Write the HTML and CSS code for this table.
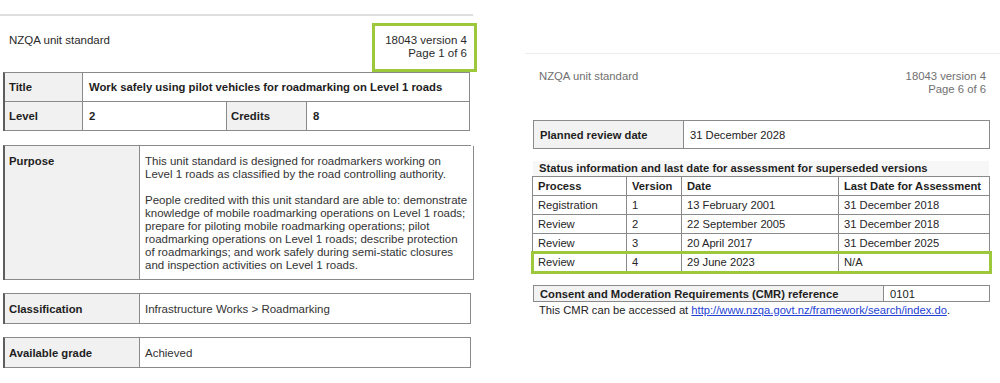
FILE: index.html
```html
<!DOCTYPE html>
<html lang="en">
<head>
<meta charset="utf-8">
<title>NZQA unit standard 18043</title>
<link rel="stylesheet" href="styles.css">
</head>
<body>
<div class="screen">
  <section class="page page-left">
    <div class="rule rule-left"></div>
    <header class="doc-head">
      <div class="doc-name">NZQA unit standard</div>
      <div class="doc-ref highlight">18043 version 4<br>Page 1 of 6</div>
    </header>

    <div class="tbl tbl-title">
      <div class="cell label">Title</div>
      <div class="cell value bold span3">Work safely using pilot vehicles for roadmarking on Level 1 roads</div>
      <div class="cell label">Level</div>
      <div class="cell value bold">2</div>
      <div class="cell label">Credits</div>
      <div class="cell value bold">8</div>
    </div>

    <div class="tbl tbl-purpose">
      <div class="cell label">Purpose</div>
      <div class="cell value text">
        <p>This unit standard is designed for roadmarkers working on<br>Level 1 roads as classified by the road controlling authority.</p>
        <p>People credited with this unit standard are able to: demonstrate<br>knowledge of mobile roadmarking operations on Level 1 roads;<br>prepare for piloting mobile roadmarking operations; pilot<br>roadmarking operations on Level 1 roads; describe protection<br>of roadmarkings; and work safely during semi-static closures<br>and inspection activities on Level 1 roads.</p>
      </div>
    </div>

    <div class="tbl tbl-pair">
      <div class="cell label">Classification</div>
      <div class="cell value text">Infrastructure Works &gt; Roadmarking</div>
    </div>

    <div class="tbl tbl-pair">
      <div class="cell label">Available grade</div>
      <div class="cell value text">Achieved</div>
    </div>
  </section>

  <section class="page page-right">
    <div class="rule rule-right"></div>
    <header class="doc-head-r">
      <div class="doc-name-r">NZQA unit standard</div>
      <div class="doc-ref-r">18043 version 4<br>Page 6 of 6</div>
    </header>

    <div class="rtbl rtbl-review">
      <div class="rcell rlabel">Planned review date</div>
      <div class="rcell">31 December 2028</div>
    </div>

    <div class="caption">Status information and last date for assessment for superseded versions</div>
    <div class="status">
      <div class="srow shead">
        <div class="scell">Process</div>
        <div class="scell">Version</div>
        <div class="scell">Date</div>
        <div class="scell">Last Date for Assessment</div>
      </div>
      <div class="srow">
        <div class="scell">Registration</div>
        <div class="scell">1</div>
        <div class="scell">13 February 2001</div>
        <div class="scell">31 December 2018</div>
      </div>
      <div class="srow">
        <div class="scell">Review</div>
        <div class="scell">2</div>
        <div class="scell">22 September 2005</div>
        <div class="scell">31 December 2018</div>
      </div>
      <div class="srow">
        <div class="scell">Review</div>
        <div class="scell">3</div>
        <div class="scell">20 April 2017</div>
        <div class="scell">31 December 2025</div>
      </div>
      <div class="srow srow-hl">
        <div class="scell">Review</div>
        <div class="scell">4</div>
        <div class="scell">29 June 2023</div>
        <div class="scell">N/A</div>
      </div>
    </div>

    <div class="rtbl rtbl-cmr">
      <div class="rcell rlabel">Consent and Moderation Requirements (CMR) reference</div>
      <div class="rcell">0101</div>
    </div>
    <p class="cmr-note">This CMR can be accessed at <a href="#">http://www.nzqa.govt.nz/framework/search/index.do</a>.</p>
  </section>
</div>
</body>
</html>
```

FILE: styles.css
```css
* { box-sizing: border-box; }

html, body {
  margin: 0;
  padding: 0;
  background: #ffffff;
}

body {
  font-family: "Liberation Sans", Arial, sans-serif;
  font-size: 11px;
  color: #222222;
}

.screen {
  display: flex;
  width: 1000px;
  height: 383px;
  overflow: hidden;
}

.page {
  display: flex;
  flex-direction: column;
}

/* ---------- left page ---------- */
.page-left {
  width: 500px;
  padding-top: 14px;
}

.rule-left {
  width: 473px;
  height: 2px;
  background: #dedede;
}

.doc-head {
  display: flex;
  justify-content: space-between;
  width: 477px;
  margin-top: 7px;
}

.doc-name {
  margin-top: 11px;
  padding-left: 9px;
  font-size: 11.5px;
  line-height: 13px;
  color: #2a2a2a;
}

.doc-ref {
  width: 105px;
  height: 49px;
  padding: 8px 7px 0 0;
  text-align: right;
  font-size: 11.5px;
  line-height: 13px;
  color: #2a2a2a;
}

.highlight {
  border: 3px solid #9ec83b;
}

.tbl {
  display: grid;
  margin-left: 3px;
  border-top: 1px solid #8a8a8a;
  border-left: 2px solid #5e5e5e;
}

.cell {
  border-right: 1px solid #8a8a8a;
  border-bottom: 1px solid #8a8a8a;
  padding: 0 6px;
  display: flex;
  align-items: center;
}

.label {
  background: #f1f1f1;
  font-weight: bold;
  font-size: 11.3px;
  color: #1e1e1e;
  padding-left: 4px;
}

.bold {
  font-weight: bold;
  font-size: 11.3px;
  color: #1e1e1e;
}

.tbl-title {
  width: 467px;
  grid-template-columns: 78px 144px 80px 1fr;
  grid-auto-rows: 29px;
}

.tbl-title .cell { height: 29px; }

.span3 { grid-column: span 3; }

.tbl-purpose {
  width: 468px;
  margin-top: 14px;
  height: 135px;
  grid-template-columns: 135px 1fr;
}

.tbl-purpose .cell {
  align-items: flex-start;
  padding-top: 9px;
}

.text {
  color: #333333;
  font-size: 11.5px;
  padding-left: 5px;
}

.tbl-purpose .text {
  display: block;
  line-height: 13px;
  white-space: nowrap;
}

.tbl-purpose p { margin: 0; }
.tbl-purpose p + p { margin-top: 13px; }

.tbl-pair {
  width: 468px;
  margin-top: 13px;
  height: 31px;
  grid-template-columns: 135px 1fr;
}

/* ---------- right page ---------- */
.page-right {
  width: 500px;
  padding-top: 53px;
  padding-left: 33px;
  font-size: 11.2px;
}

.rule-right {
  margin-left: -8px;
  width: 475px;
  height: 1px;
  background: #ececec;
}

.doc-head-r {
  display: flex;
  justify-content: space-between;
  width: 457px;
  margin-top: 16px;
  padding: 0 4px 0 6px;
  font-size: 11.3px;
  line-height: 13px;
  color: #707070;
}

.doc-ref-r { text-align: right; }

.rtbl {
  display: grid;
  width: 457px;
  border: 1px solid #8a8a8a;
}

.rcell {
  display: flex;
  align-items: center;
  padding: 0 6px;
  color: #222222;
}

.rcell + .rcell { border-left: 1px solid #8a8a8a; }

.rlabel {
  background: #f2f2f2;
  font-weight: bold;
  color: #1e1e1e;
}

.rtbl-review {
  margin-top: 24px;
  height: 29px;
  grid-template-columns: 149px 1fr;
}

.caption {
  margin-top: 12px;
  width: 456px;
  height: 15px;
  padding-left: 6px;
  line-height: 15px;
  font-weight: bold;
  color: #1e1e1e;
  background: #f7f7f7;
}

.status {
  width: 458px;
  margin-left: -1px;
  border-top: 1px solid #8a8a8a;
  border-left: 1px solid #8a8a8a;
}

.srow {
  display: grid;
  grid-template-columns: 94px 55px 157px 1fr;
  height: 19px;
}

.scell {
  display: flex;
  align-items: center;
  padding: 0 5px;
  border-right: 1px solid #8a8a8a;
  border-bottom: 1px solid #8a8a8a;
  color: #262626;
}

.shead .scell {
  font-weight: bold;
  color: #1e1e1e;
}

.srow-hl {
  outline: 3px solid #9ec83b;
  outline-offset: -1px;
  position: relative;
}

.rtbl-cmr {
  margin-top: 13px;
  height: 17px;
  grid-template-columns: 349px 1fr;
}

.cmr-note {
  margin: 1px 0 0;
  padding-left: 6px;
  line-height: 14px;
  color: #222222;
}

.cmr-note a {
  color: #2342d4;
  text-decoration: underline;
}
```
